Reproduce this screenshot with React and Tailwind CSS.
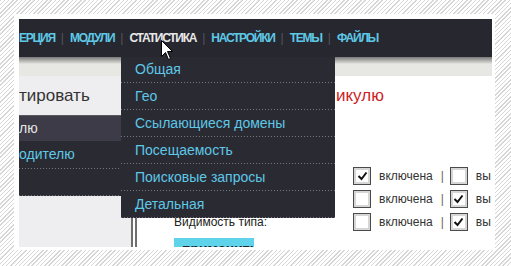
const narrow = "font-['Liberation_Sans_Narrow','Liberation_Sans',Arial,sans-serif]";

function Dots() {
  return <div className="h-px w-full bg-[linear-gradient(to_right,#77777f_1px,transparent_1px)] bg-[length:3px_1px]" />;
}

function Sep() {
  return <span className="text-[#55555d] font-normal tracking-normal">|</span>;
}

function Box({ checked }) {
  return (
    <div className="w-[18px] h-[18px] shrink-0 border border-[#4a4a4a] bg-white shadow-[inset_0_0_0_2px_#d6d6d6] flex items-center justify-center">
      {checked && (
        <svg width="11" height="10" viewBox="0 0 11 10">
          <path d="M1.5 5 L4.5 8 L9.5 1.5" stroke="#111" strokeWidth="2" fill="none" />
        </svg>
      )}
    </div>
  );
}

function Row({ label, a, b }) {
  return (
    <div className="h-[22px] flex items-center whitespace-nowrap text-[12px] text-[#333] font-['Liberation_Sans',Arial,sans-serif]">
      <div className="w-[179px] shrink-0 text-[#222]">{label}</div>
      <Box checked={a} />
      <span className="ml-[8px]">включена</span>
      <span className="ml-[8px] mr-[6px] text-[#666]">|</span>
      <Box checked={b} />
      <span className="ml-[8px]">вы</span>
    </div>
  );
}

const menuItems = ["Общая", "Гео", "Ссылающиеся домены", "Посещаемость", "Поисковые запросы", "Детальная"];

export default function App() {
  return (
    <div className="w-[511px] h-[266px] overflow-hidden bg-[repeating-linear-gradient(135deg,#d6d6d6_0px,#d6d6d6_1px,#ffffff_1px,#ffffff_3px)] pt-[14px] pl-[14px]">
      <div className="w-[481px] h-[236px] bg-white pt-[5px] pl-[5px]">
        <div className="w-[473px] h-[228px] overflow-hidden relative bg-white flex flex-col">
          {/* header */}
          <div className={`h-[38px] shrink-0 bg-[#27272f] flex items-center gap-[6px] text-[12px] font-bold tracking-[-1.25px] whitespace-nowrap ${narrow}`}>
            <span className="text-[#5ec8e6]">ЕРЦИЯ</span>
            <Sep />
            <span className="text-[#5ec8e6]">МОДУЛИ</span>
            <Sep />
            <span className="text-[#e8e8e8]">СТАТИСТИКА</span>
            <Sep />
            <span className="text-[#5ec8e6]">НАСТРОЙКИ</span>
            <Sep />
            <span className="text-[#5ec8e6]">ТЕМЫ</span>
            <Sep />
            <span className="text-[#5ec8e6]">ФАЙЛЫ</span>
          </div>
          <div className="h-[7px] shrink-0 bg-gradient-to-b from-[#7a7a7a] to-[#e6e6e2]" />
          <div className="h-[12px] shrink-0 bg-[#e7e7e3]" />
          {/* body */}
          <div className="flex-1 flex">
            <div className="w-[114px] shrink-0 flex flex-col border-r-2 border-[#6f6f6f]">
              <div className={`h-[39px] shrink-0 bg-[#eeeef0] flex items-center text-[17px] text-[#333] whitespace-nowrap ${narrow}`}>
                тировать
              </div>
              <div className={`shrink-0 bg-[#2a2a33] border-t border-[#5a5a62] text-[14px] whitespace-nowrap ${narrow}`}>
                <div className="h-[25px] bg-[#3d3b47] flex items-center text-[#e6e6e6]">лю</div>
                <div className="h-[27px] flex items-center text-[#5ec8e6]">одителю</div>
                <Dots />
                <div className="h-[26px]" />
                <Dots />
              </div>
              <div className="flex-1 bg-[#eeeef0]" />
            </div>
            <div className="w-[2px] shrink-0 bg-white" />
            <div className="w-[2px] shrink-0 bg-[#6f6f6f]" />
            <div className="flex-1 flex flex-col">
              <div className={`h-[39px] shrink-0 flex items-center pl-[199px] text-[17px] text-[#cc1f1f] whitespace-nowrap ${narrow}`}>
                икулю
              </div>
              <div className="mt-[50px] pl-[37px] flex flex-col gap-px">
                <Row label="" a={true} b={false} />
                <Row label="" a={false} b={true} />
                <Row label="Видимость типа:" a={false} b={true} />
                <div className={`mt-[4px] w-[80px] h-[22px] bg-[#5fd3ea] pl-[8px] pt-[3px] text-[14px] leading-[16px] font-bold text-[#222] ${narrow}`}>
                  применить
                </div>
              </div>
            </div>
          </div>

          {/* dropdown menu */}
          <div className={`absolute left-[102px] top-[38px] w-[214px] bg-[#2a2a33] text-[14px] text-[#5ec8e6] whitespace-nowrap ${narrow}`}>
            {menuItems.map((t, i) => (
              <div key={t}>
                <div className={i === 0 ? "h-[25px] flex items-center pl-[14px]" : "h-[26px] flex items-center pl-[14px]"}>{t}</div>
                <Dots />
              </div>
            ))}
          </div>

          {/* cursor */}
          <svg width="13" height="21" viewBox="0 0 13 21" className="absolute left-[142px] top-[21px]">
            <path d="M0.5 0.5 L0.5 16.5 L4.5 12.5 L7.5 19.5 L9.5 18.5 L6.5 11.5 L11.5 11.5 Z" fill="#fff" stroke="#000" strokeWidth="1" />
          </svg>
        </div>
      </div>
    </div>
  );
}
